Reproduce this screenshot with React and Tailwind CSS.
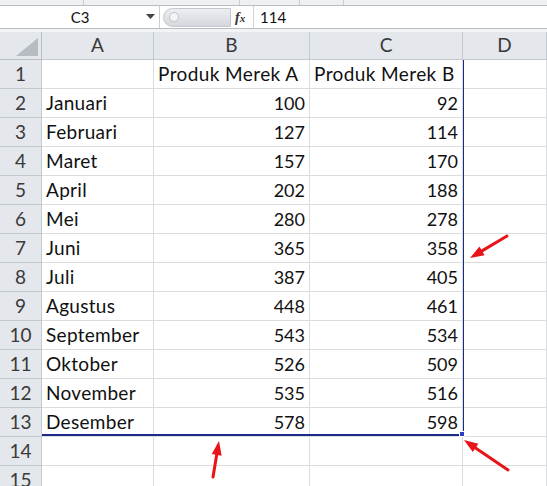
import React from "react";

const rows = [
  ["", "Produk Merek A", "Produk Merek B"],
  ["Januari", 100, 92],
  ["Februari", 127, 114],
  ["Maret", 157, 170],
  ["April", 202, 188],
  ["Mei", 280, 278],
  ["Juni", 365, 358],
  ["Juli", 387, 405],
  ["Agustus", 448, 461],
  ["September", 543, 534],
  ["Oktober", 526, 509],
  ["November", 535, 516],
  ["Desember", 578, 598],
  ["", "", ""],
  ["", "", ""],
];

function Arrow({ x1, y1, x2, y2 }) {
  const ang = Math.atan2(y2 - y1, x2 - x1);
  const len = 14;
  const w = 5;
  const bx = x2 - len * Math.cos(ang);
  const by = y2 - len * Math.sin(ang);
  const px = -Math.sin(ang) * w;
  const py = Math.cos(ang) * w;
  return (
    <g>
      <line x1={x1} y1={y1} x2={bx} y2={by} stroke="#e8141a" strokeWidth="3" strokeLinecap="round" />
      <polygon points={`${x2},${y2} ${bx + px},${by + py} ${bx - px},${by - py}`} fill="#e8141a" />
    </g>
  );
}

export default function App() {
  const font = { fontFamily: "Lato, 'Open Sans', sans-serif" };
  return (
    <div className="relative w-[547px] h-[486px] overflow-hidden bg-white text-[#111]" style={font}>
      {/* ribbon edge */}
      <div className="flex h-[6px] bg-[#eef0f3] border-b border-[#b9bec5]">
        <div className="w-[84px] border-r border-[#c9ced4]" />
        <div className="w-[156px] border-r border-[#c9ced4]" />
        <div className="w-[60px] border-r border-[#c9ced4]" />
        <div className="w-[44px] border-r border-[#c9ced4]" />
      </div>

      {/* formula bar */}
      <div className="flex h-[23px] items-center bg-white border-b border-[#b6bcc4]">
        <div className="flex w-[160px] h-full items-center border-r border-[#c9ced4]">
          <span className="flex-1 text-center text-[15px] pl-[14px]">C3</span>
          <svg width="9" height="6" viewBox="0 0 9 6" className="mr-[4px]">
            <polygon points="0,0 9,0 4.5,5" fill="#444" />
          </svg>
        </div>
        <div className="flex w-[68px] h-[19px] ml-[3px] items-center rounded-l-full bg-gradient-to-b from-[#eceef1] to-[#d4d8dd] border border-[#c3c8cf]">
          <span className="ml-[5px] w-[10px] h-[10px] rounded-full border border-[#c0c4ca] bg-[#f3f4f6]" />
        </div>
        <span
          className="ml-[4px] w-[17px] text-[14px] italic font-bold text-[#333]"
          style={{ fontFamily: "'Liberation Serif', serif" }}
        >
          f<span className="text-[11px]">x</span>
        </span>
        <div className="h-full w-px bg-[#d0d4d9] ml-[1px]" />
        <span className="ml-[6px] text-[15px]">114</span>
      </div>

      <div className="h-[3px] bg-[#f3f4f6]" />

      {/* sheet grid */}
      <div className="grid grid-cols-[42px_112px_156px_153px_84px]">
        <div className="h-[28px] bg-[#e4e7eb] border-r border-b border-[#b9bec5] flex items-end justify-end p-[3px]">
          <svg width="22" height="18" viewBox="0 0 22 18">
            <polygon points="22,0 22,18 0,18" fill="#b7bcc2" />
          </svg>
        </div>
        {["A", "B", "C", "D"].map((c) => (
          <div
            key={c}
            className="h-[28px] bg-[#e4e7eb] border-r border-b border-[#c4c9cf] flex items-center justify-center text-[19px] text-[#3a3a3a]"
          >
            {c}
          </div>
        ))}

        {rows.map((r, i) => (
          <React.Fragment key={i}>
            <div className="h-[29px] bg-[#e4e7eb] border-r border-b border-[#c4c9cf] flex items-center justify-center text-[19px] text-[#3a3a3a]">
              {i + 1}
            </div>
            <div className="h-[29px] border-r border-b border-[#dadcdd] flex items-center px-[4px] text-[19px] tracking-[0.3px]">
              {r[0]}
            </div>
            {[r[1], r[2]].map((v, j) => (
              <div
                key={j}
                className={
                  typeof v === "number"
                    ? "h-[29px] border-r border-b border-[#dadcdd] flex items-center justify-end px-[4px] text-[18px]"
                    : "h-[29px] border-r border-b border-[#dadcdd] flex items-center justify-start px-[4px] text-[19px] tracking-[0.4px]"
                }
              >
                {v}
              </div>
            ))}
            <div className="h-[29px] border-r border-b border-[#dadcdd]" />
          </React.Fragment>
        ))}
      </div>

      {/* selection border */}
      <div className="absolute left-[42px] top-[60px] w-[422px] h-[376px] border-r border-b-2 border-[#1e2a8a] pointer-events-none" />
      <div className="absolute left-[459px] top-[431px] w-[6px] h-[6px] bg-[#2a3cc4] border border-white" />

      {/* arrows */}
      <svg className="absolute left-0 top-0 pointer-events-none" width="547" height="486">
        <Arrow x1={507} y1={236} x2={470} y2={258} />
        <Arrow x1={213} y1={477} x2={219} y2={441} />
        <Arrow x1={508} y1={470} x2={464} y2={440} />
      </svg>
    </div>
  );
}
